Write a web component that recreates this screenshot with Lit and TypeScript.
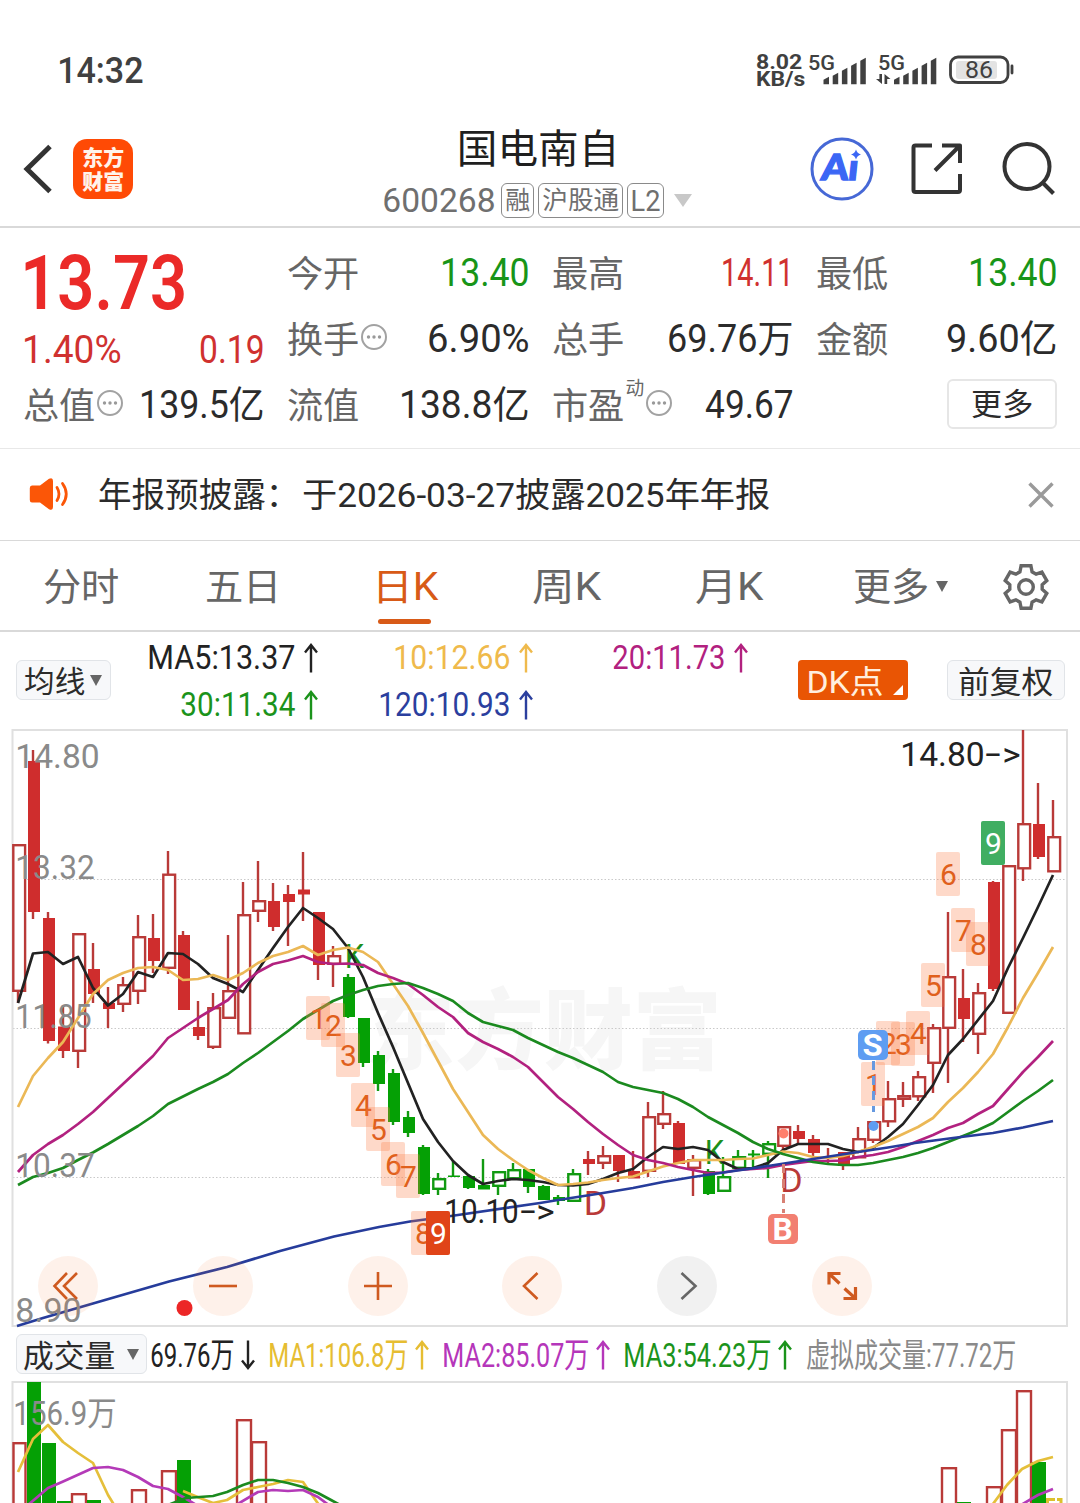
import { LitElement, html, svg, css } from "lit";
import { customElement, property } from "lit/decorators.js";

type Pt = [number, number];

/** A run of text drawn to an exact ink width, sized by cap height so rows can centre it. */
@customElement("fit-text")
class FitText extends LitElement {
  @property({ type: Number }) w = 100;
  @property({ type: Number }) size = 36;
  @property() text = "";
  static styles = css`
    :host { display: block; flex: none; }
    svg { display: block; overflow: visible; }
    text { fill: currentColor; font-family: Roboto, "Noto Sans CJK SC", sans-serif; font-weight: inherit; }
  `;
  render() {
    const cjk = this.text.charCodeAt(0) > 0x2e80;
    const b = this.size * (cjk ? 0.03 : 0.05);
    const h = this.size * 0.71;
    return html`<svg width=${this.w} height=${h}>
      <text x=${-b} y=${h} font-size=${this.size} textLength=${this.w + 1.3 * b} lengthAdjust="spacingAndGlyphs">${this.text}</text>
    </svg>`;
  }
}

@customElement("trend-arrow")
class TrendArrow extends LitElement {
  @property({ type: Boolean }) down = false;
  static styles = css`
    :host { display: block; flex: none; }
    svg { display: block; fill: none; stroke: currentColor; stroke-width: 2.4; }
    .down { transform: rotate(180deg); }
  `;
  render() {
    return html`<svg class=${this.down ? "down" : ""} width="14" height="30" viewBox="0 0 14 30">
      <path d="M7 29.5V2M1 9.5 7 2 13 9.5" />
    </svg>`;
  }
}

const t = (text: string, w: number, size = 38, cls = "") =>
  html`<fit-text class=${cls} .text=${text} .w=${w} .size=${size}></fit-text>`;

const more = html`<svg class="more" width="26" height="26" viewBox="0 0 26 26">
  <circle cx="13" cy="13" r="12" /><circle class="dot" cx="7.5" cy="13" r="1.7" /><circle class="dot" cx="13" cy="13" r="1.7" /><circle class="dot" cx="18.5" cy="13" r="1.7" />
</svg>`;

/* Candle: [kind, body top, body bottom, high, low]; R/G = red/green, lower case = hollow. */
type Candle = [string, number, number, number, number];
const candles: Candle[] = [
  ["r", 844, 992, 844, 1003], ["R", 761, 912, 750, 919], ["R", 918, 1041, 912, 1043.5], ["R", 1026.5, 1051, 1005, 1058],
  ["r", 933, 1052, 933, 1068], ["R", 969, 994, 943, 1003], ["R", 1003, 1009, 987, 1028], ["r", 984, 1005, 977, 1012],
  ["r", 936, 992, 915, 1004], ["R", 938, 961, 914, 973], ["r", 873.5, 969, 851, 974], ["R", 935, 1010, 931, 1010],
  ["R", 1027, 1036, 1001, 1040], ["r", 1007, 1048, 993, 1049], ["r", 990, 1019, 935, 1019], ["r", 914, 1034.5, 882, 1034],
  ["r", 900, 912, 861, 922], ["R", 901, 927, 883, 931], ["R", 894, 902, 885, 946], ["R", 889.5, 894.5, 852, 921],
  ["R", 912, 965, 912, 980], ["r", 955, 965, 946, 987], ["G", 977, 1017, 974, 1018], ["G", 1018, 1063, 1018, 1067],
  ["G", 1055, 1084, 1051, 1091], ["G", 1073, 1122, 1069, 1125], ["G", 1117, 1133, 1111, 1137], ["G", 1147, 1194, 1145, 1195],
  ["g", 1178, 1190, 1173, 1195], ["G", 1175.5, 1177, 1161, 1177], ["G", 1176, 1188, 1174, 1189], ["G", 1185, 1189.5, 1159, 1189],
  ["g", 1171, 1187, 1171, 1195], ["g", 1169, 1179.5, 1163, 1180], ["G", 1169, 1187, 1169, 1193], ["G", 1186, 1200, 1185, 1200],
  ["G", 1197, 1201, 1195, 1205], ["g", 1173, 1202, 1169, 1202], ["R", 1159, 1164, 1151, 1175], ["r", 1155, 1164, 1146, 1169],
  ["R", 1155, 1171, 1155, 1182], ["R", 1171, 1178.5, 1151, 1178], ["r", 1116, 1172, 1102, 1177], ["r", 1113, 1125, 1091, 1129],
  ["R", 1123, 1164, 1121, 1164], ["r", 1159, 1169, 1155, 1196], ["G", 1171, 1194, 1169, 1195], ["g", 1176, 1192, 1157, 1192],
  ["g", 1156, 1169, 1150, 1169], ["G", 1153.5, 1155.5, 1150, 1168], ["g", 1143, 1155, 1141, 1178], ["r", 1126, 1147, 1126, 1150],
  ["R", 1131, 1139, 1125, 1144], ["R", 1139, 1153, 1135, 1156], ["R", 1160, 1162, 1148, 1164], ["R", 1152, 1166, 1152, 1170],
  ["r", 1138, 1158.5, 1127, 1158], ["r", 1121, 1141, 1121, 1143], ["r", 1098, 1122.5, 1081, 1127], ["r", 1095, 1100, 1082, 1107],
  ["r", 1076, 1097.5, 1071, 1101], ["r", 1027, 1064, 1024, 1093], ["r", 976, 1029, 912, 1083], ["R", 998, 1019, 969, 1042],
  ["r", 992, 1035, 983, 1054], ["R", 882, 989, 881, 991], ["r", 865, 1014, 865, 1013], ["r", 823, 869.5, 730, 881],
  ["R", 824, 857, 783, 859], ["r", 836, 872.5, 800, 872],
];

const cx = (i: number) => 18 + 15 * i;
const series = (ys: number[]): Pt[] => ys.map((y, i) => [cx(i), y]);

const ma5 = series([1003, 953.5, 952, 964, 957, 988, 1005.5, 994, 972, 977, 953, 954, 964, 978, 984, 992, 970, 948, 927, 908, 918, 929, 948, 977, 1013, 1047, 1083, 1119, 1142, 1161, 1175, 1184, 1181, 1179, 1180, 1182, 1185, 1185.5, 1184, 1179, 1173, 1169, 1157, 1147, 1149, 1147, 1150, 1162, 1169, 1168, 1163, 1150, 1144, 1144, 1144, 1149, 1152, 1148, 1137, 1124, 1105, 1085, 1055, 1039, 1020, 1001, 968, 938, 907, 875]);
const ma10 = series([1107, 1076, 1058, 1042, 1018, 994, 980, 973, 968, 967, 970, 980, 979, 975, 980, 973, 963, 956, 952, 946, 955, 950, 947.5, 952, 962, 984, 1006, 1033, 1061, 1089, 1112, 1135, 1149, 1160, 1170, 1178, 1185, 1184, 1182.5, 1180, 1178, 1176.5, 1171.5, 1166.5, 1163, 1160, 1160, 1160, 1159, 1158.5, 1155, 1151.5, 1153, 1157, 1158, 1156, 1152, 1147, 1141, 1134, 1127, 1118, 1102, 1088, 1072, 1054, 1027, 998, 973, 947]);
const ma20 = series([1172, 1155, 1144, 1135, 1124, 1112, 1098, 1084, 1070, 1056, 1038, 1028, 1018, 1009, 1000, 984, 972, 964, 960.5, 956, 962, 964, 963.5, 965, 973, 978, 984, 995, 1007, 1017, 1033, 1042, 1049, 1057, 1067, 1082, 1097, 1109, 1122, 1134, 1145, 1155, 1160, 1163, 1167, 1170, 1173, 1172.5, 1170, 1169, 1168, 1165, 1163, 1161, 1161, 1160.5, 1157, 1155, 1152, 1147, 1141, 1135, 1128, 1123, 1114, 1106, 1089, 1072, 1057, 1041]);
const ma30 = series([1185, 1177, 1173, 1168, 1160, 1152.5, 1144, 1135, 1126, 1116, 1104, 1096.5, 1089, 1082, 1074, 1063, 1053, 1042, 1031, 1019, 1010, 1001, 995, 990, 986, 984, 983, 988, 994, 1001, 1013, 1022, 1026, 1030, 1038, 1045, 1052, 1058, 1065, 1072, 1082, 1087, 1090, 1093, 1099, 1107, 1117, 1125, 1133, 1142, 1149, 1154, 1158, 1162, 1164, 1165, 1165, 1163, 1160, 1157, 1153, 1148, 1142, 1136, 1130, 1123, 1112, 1101, 1091, 1080]);
const ma120: Pt[] = [[17, 1326], [43, 1318], [105, 1300], [169, 1281.5], [227, 1267], [280, 1251], [334, 1236.5], [379, 1227], [410, 1221.5], [451, 1216], [540, 1203], [558, 1200], [600, 1193.5], [633, 1188], [663, 1182], [693, 1177], [727, 1172], [768, 1166], [813, 1159], [858, 1152], [888, 1147.5], [915, 1143], [953, 1138], [993, 1133], [1023, 1127.5], [1053, 1121]];

/* Nine-count labels: [digit, box x, box y, style]. */
const counts: [string, number, number, string][] = [
  ["1", 306, 996, "soft"], ["2", 321, 1003, "soft"], ["3", 336, 1033, "soft"], ["4", 351, 1083, "soft"], ["5", 366, 1107, "soft"],
  ["6", 381, 1142, "soft"], ["7", 396, 1154, "soft"], ["8", 411, 1211, "soft"], ["9", 426, 1211, "hot"],
  ["1", 861, 1062, "soft"], ["2", 876, 1021, "soft"], ["3", 891, 1022, "soft"], ["4", 906, 1011, "soft"], ["5", 921, 963, "soft"],
  ["6", 936, 852, "soft"], ["7", 951, 908, "soft"], ["8", 966, 922, "soft"], ["9", 981, 821, "cool"],
];

/* Volume bars: [slot, kind, top]. */
const volumes: [number, string, number][] = [
  [0, "r", 1442], [1, "G", 1382], [2, "G", 1443], [3, "G", 1501], [4, "r", 1493], [5, "G", 1500], [8, "r", 1489], [10, "r", 1470],
  [11, "G", 1460], [15, "r", 1419], [16, "r", 1441], [62, "r", 1467], [63, "G", 1502], [65, "r", 1486], [66, "r", 1429], [67, "r", 1390], [68, "G", 1462],
];
const volLines: [string, Pt[]][] = [
  ["vy", [[18, 1472], [33, 1439], [48, 1425], [63, 1442], [78, 1453], [93, 1463], [108, 1495], [116, 1508]]],
  ["vy", [[183, 1491], [200, 1498], [213, 1503], [227, 1500], [243, 1490], [258, 1487], [273, 1484], [288, 1480], [303, 1482], [319, 1505]]],
  ["vy", [[990, 1508], [1007, 1485], [1022, 1469], [1038, 1461], [1053, 1457]]],
  ["vp", [[28, 1505], [48, 1488], [62, 1482], [93, 1468], [108, 1467], [123, 1470], [138, 1477], [153, 1486], [168, 1489], [183, 1497], [198, 1506]]],
  ["vp", [[236, 1505], [258, 1492], [273, 1490], [288, 1491], [303, 1490], [318, 1497], [330, 1506]]],
  ["vp", [[1021, 1505], [1038, 1495], [1053, 1489]]],
  ["vg", [[168, 1505], [186, 1498], [213, 1496], [227, 1492], [243, 1485], [258, 1480], [273, 1480], [288, 1483], [303, 1487], [318, 1493], [331, 1500], [342, 1506]]],
];

const pts = (p: Pt[]) => p.map((q) => q.join(",")).join(" ");

const ink = (text: string, x: number, y: number, w: number, size: number, cls: string) => {
  const b = size * 0.05;
  return svg`<text class=${cls} x=${x - b} y=${y} font-size=${size} textLength=${w + 1.4 * b} lengthAdjust="spacingAndGlyphs">${text}</text>`;
};

@customElement("price-chart")
class PriceChart extends LitElement {
  static styles = css`
    :host { display: block; height: 602px; position: relative; }
    svg { display: block; }
    text { font-family: Roboto, "Noto Sans CJK SC", sans-serif; }
    .frame { fill: none; stroke: #e0e0e0; stroke-width: 2; }
    .grid { stroke: #c9c9c9; stroke-width: 1.2; stroke-dasharray: 1.5 2; }
    .mark { fill: #f6f6f6; font-weight: 900; }
    .R { fill: #cf2d2d; } .G { fill: #05a005; }
    .r, .wr { fill: #fff; stroke: #b93a38; stroke-width: 2.4; }
    .g, .wg { fill: #fff; stroke: #119a11; stroke-width: 2.4; }
    .line { fill: none; stroke-width: 2.7; stroke-linejoin: round; }
    .k { stroke: #222; } .y { stroke: #ebb856; } .p { stroke: #b2217f; } .n { stroke: #1b8a1f; } .b { stroke: #263c9b; }
    .axis { fill: #8a8a8a; }
    .note { fill: #222; }
    .sell { fill: #b93a38; } .buy { fill: #1b8f1b; }
    .boxsoft { fill: #fa7d46; fill-opacity: 0.29; } .boxhot { fill: #e04418; } .boxcool { fill: #40ae62; }
    .soft { fill: #e0601c; } .hot, .cool { fill: #fff; }
    .sb { fill: #5e9df2; } .bb { fill: #f27f71; } .dotb { fill: #ff7f6c; }
    .badge { fill: #fff; font-weight: 700; }
    .ds { stroke: #6699e0; stroke-width: 3; stroke-dasharray: 9 6; }
    .db { stroke: #d88074; stroke-width: 3; stroke-dasharray: 9 6; }
    .alert { fill: #ec2626; }
    .tools { position: absolute; left: 38px; right: 208px; top: 528px; display: flex; justify-content: space-between; }
    .tool { width: 60px; height: 60px; border-radius: 50%; background: rgba(250, 120, 50, 0.1); }
    .tool.off { background: rgba(120, 120, 120, 0.1); }
    .tool path { fill: none; stroke: #cf5a20; stroke-width: 2.6; }
    .tool.bold path { stroke-width: 3.2; }
    .tool.off path { stroke: #666; }
  `;
  private candle([kind, top, bot, hi, lo]: Candle, i: number) {
    const x = cx(i);
    const c = kind.toLowerCase();
    const hollow = kind === c;
    return svg`<line class=${"w" + c} x1=${x} x2=${x} y1=${hi} y2=${lo} />${hollow
      ? svg`<rect class=${c} x=${x - 4.7} y=${top + 1.2} width="11.8" height=${Math.max(bot - top - 2.4, 1)} />`
      : svg`<rect class=${kind} x=${x - 5} y=${top} width="12" height=${bot - top} />`}`;
  }
  render() {
    const icons: [string, string][] = [
      ["M29 17 16.5 30 29 43M39 17 26 30 39 43", ""],
      ["M16 30H44", ""],
      ["M16 30H44M30 16V44", ""],
      ["M35.5 17 22 30 35.5 43", ""],
      ["M24.5 17 38.5 30 24.5 43", "off"],
      ["M17 28.500V17.500H28.500M17 17.500 27.500 27.500M43.500 31V42.500H31.500M43.500 42.500 32.500 32.500", "bold"],
    ];
    return html`<svg width="1080" height="602" viewBox="0 728 1080 602">
        ${ink("东方财富", 370, 1062, 350, 88, "mark")}
        ${[879.5, 1028.5, 1177.5].map((y) => svg`<line class="grid" x1="13" x2="1067" y1=${y} y2=${y} />`)}
        <rect class="frame" x="12.5" y="730" width="1054.5" height="596" />
        ${candles.map((c, i) => this.candle(c, i))}
        ${ink("K", 346.5, 968, 17, 34, "buy")} ${ink("K", 706.5, 1164, 17, 34, "buy")}
        ${ink("D", 585.5, 1215, 21, 34, "sell")} ${ink("D", 782, 1192, 20, 34, "sell")}
        <polyline class="line k" points=${pts(ma5)} />
        <polyline class="line y" points=${pts(ma10)} />
        <polyline class="line p" points=${pts(ma20)} />
        <polyline class="line n" points=${pts(ma30)} />
        <polyline class="line b" points=${pts(ma120)} />
        ${counts.map(([d, x, y, c]) => svg`<rect class=${"box" + c} x=${x} y=${y} width="24" height="44" rx="2" />
          <text class=${c} x=${x + 12.5} y=${y + 33} font-size="30" text-anchor="middle">${d}</text>`)}
        ${ink("14.80", 17, 767.5, 82, 34, "axis")} ${ink("13.32", 17, 878.5, 77, 34, "axis")} ${ink("11.85", 17, 1027.5, 74, 34, "axis")}
        ${ink("10.37", 17, 1177, 77, 34, "axis")} ${ink("8.90", 17, 1322, 64, 34, "axis")}
        ${ink("14.80", 902, 766, 82, 34, "note")} ${ink("-", 987, 765, 13, 34, "note")} ${ink(">", 1004, 766, 16, 34, "note")}
        ${ink("10.10", 446, 1222.5, 72, 34, "note")} ${ink("-", 522, 1221.5, 13, 34, "note")} ${ink(">", 538, 1222.5, 16, 34, "note")}
        <line class="ds" x1="873.5" x2="873.5" y1="1061" y2="1112" /><circle class="sb" cx="873.5" cy="1126" r="5" />
        <rect class="sb" x="858" y="1030" width="30" height="30" rx="5" />${ink("S", 864, 1056, 18, 31, "badge")}
        <line class="db" x1="783.5" x2="783.5" y1="1164" y2="1213" /><circle class="dotb" cx="783.5" cy="1133.5" r="5" />
        <rect class="bb" x="768" y="1214" width="30" height="30" rx="5" />${ink("B", 774, 1240, 18, 31, "badge")}
        <circle class="alert" cx="184.5" cy="1308" r="8" />
      </svg>
      <div class="tools">${icons.map(([d, c]) => html`<div class="tool ${c}"><svg width="60" height="60"><path d=${d} /></svg></div>`)}</div>`;
  }
}

@customElement("volume-chart")
class VolumeChart extends LitElement {
  static styles = css`
    :host { display: block; height: 125px; }
    svg { display: block; }
    .frame { fill: none; stroke: #e0e0e0; stroke-width: 2; }
    .r { fill: #fff; stroke: #b93a38; stroke-width: 2.4; }
    .G { fill: #05a005; }
    .line { fill: none; stroke-width: 2.7; stroke-linejoin: round; }
    .vy { stroke: #e5bf3a; } .vp { stroke: #b43ab8; } .vg { stroke: #1b8a1f; }
    .axis { fill: #8a8a8a; font-family: Roboto, "Noto Sans CJK SC", sans-serif; }
    .corner { fill: none; stroke: #dcc12c; stroke-width: 3; }
  `;
  render() {
    return html`<svg width="1080" height="125" viewBox="0 1378 1080 125">
      <rect class="frame" x="12.5" y="1382" width="1054.5" height="200" />
      ${volumes.map(([i, k, y]) => k === "G"
        ? svg`<rect class="G" x=${cx(i) - 6} y=${y} width="14" height="160" />`
        : svg`<rect class="r" x=${cx(i) - (i ? 6 : 4.5)} y=${y + 1.2} width=${i ? 14 : 12} height="160" />`)}
      ${volLines.map(([c, p]) => svg`<polyline class=${"line " + c} points=${pts(p)} />`)}
      <path class="corner" d="M1046 1499.5H1055M1047.5 1499V1503M1057 1499.5H1061V1503" />
      ${ink("156.9万", 15, 1424.5, 101, 33, "axis")}
    </svg>`;
  }
}

const gearPath = () => {
  const p: string[] = [];
  for (let k = 0; k < 6; k++) {
    for (const [r, a] of [[16.4, -22], [21.8, -13], [21.8, 13], [16.4, 22]]) {
      const th = ((k * 60 + a - 90) * Math.PI) / 180;
      p.push(`${(24 + r * Math.cos(th)).toFixed(1)} ${(24 + r * Math.sin(th)).toFixed(1)}`);
    }
  }
  return "M" + p.join("L") + "Z";
};

@customElement("app-root")
class AppRoot extends LitElement {
  static styles = css`
    :host { display: block; width: 1080px; height: 1503px; overflow: hidden; background: #fff; font-family: Roboto, "Noto Sans CJK SC", sans-serif; color: #2b2b2b; }
    * { box-sizing: border-box; }
    svg { display: block; flex: none; overflow: visible; }
    .row { display: flex; align-items: center; }
    .status { height: 110px; padding: 30px 67px 0 59px; justify-content: space-between; color: #404040; font-weight: 500; }
    .sys { display: flex; align-items: center; }
    .net { display: flex; flex-direction: column; gap: 3px; font-weight: 700; margin-right: 4px; }
    .sig text, .batt text { font-family: Roboto, sans-serif; fill: #404040; font-weight: 500; }
    .batt .lvl { font-weight: 400; }
    .sig { fill: #404040; }
    .tip, .shell { fill: none; stroke: #404040; stroke-width: 2.8; }
    .tip { stroke-linecap: round; }
    .charge { fill: #e3e3e3; }
    .head { height: 118px; border-bottom: 2px solid #d9d9d9; display: grid; grid-template-columns: 340px 396px 344px; align-items: center; padding-top: 2px; }
    .left { display: flex; align-items: center; padding-left: 24px; gap: 21px; }
    .stroke { fill: none; stroke: #333; stroke-width: 4; stroke-linejoin: round; }
    .back { stroke-width: 5; stroke-linejoin: miter; }
    .logo { width: 60px; height: 60px; border-radius: 14px; background: #ff4a05; color: #fff3ea; display: flex; flex-direction: column; align-items: center; justify-content: center; gap: 9px; font-weight: 900; }
    .mid { display: flex; flex-direction: column; align-items: center; padding-top: 9px; }
    .name { height: 40px; display: flex; align-items: center; margin-bottom: 13px; color: #1f1f1f; }
    .codes { display: flex; align-items: center; gap: 4px; height: 36px; color: #6f6f6f; }
    .tag { border: 1.5px solid #8a8a8a; border-radius: 6px; height: 35px; display: flex; align-items: center; justify-content: center; }
    .t1 { width: 33px; margin-left: 2px; } .t3 { width: 85px; } .t2 { width: 37px; }
    .caret { width: 0; border-style: solid; border-color: #c8c8c8 transparent transparent; border-width: 13px 9.5px 0; margin-left: 6px; }
    .right { display: flex; align-items: center; padding-left: 74px; }
    .ai { fill: none; stroke: #4668d6; stroke-width: 3; }
    .aifill { fill: #3b66f5; } .aitext { fill: #3b66f5; stroke: #3b66f5; stroke-width: 1.4; font: 900 36px Lato, Roboto, sans-serif; }
    .share { margin-left: 37px; } .find { margin-left: 39px; }
    .stats { height: 221px; padding: 11px 0 0 24px; border-bottom: 1.5px solid #e8e8e8; display: grid; grid-template-columns: 240px 241px 240px 240px; grid-template-rows: 66px 66px 66px; column-gap: 24px; }
    .cell { display: flex; align-items: center; justify-content: space-between; }
    .price { grid-row: 1 / span 2; display: flex; flex-direction: column; padding-top: 16px; gap: 27px; }
    .big { font-weight: 600; color: #eb2a28; }
    .pair { display: flex; justify-content: space-between; }
    .label { display: flex; align-items: center; gap: 2px; color: #666; padding-top: 3px; }
    .red { color: #d0312f; } .green { color: #189518; }
    .more { fill: none; stroke: #a2a2a2; stroke-width: 2; margin-top: -5px; }
    .dot { fill: #999; stroke: none; }
    .sup { align-self: flex-start; margin-top: -12px; }
    .morebtn { margin-left: auto; width: 110px; height: 50px; border: 2px solid #e6e6e6; border-radius: 6px; display: flex; align-items: center; justify-content: center; }
    .notice { height: 92px; border-bottom: 1.5px solid #d9d9d9; padding: 0 26px 0 29px; }
    .notice .msg { margin: 2px auto 0 30px; display: flex; gap: 4px; }
    .horn { fill: #fb5607; } .wave { fill: none; stroke: #fb5607; stroke-width: 2.8; stroke-linecap: round; }
    .close { fill: none; stroke: #9a9a9a; stroke-width: 3.4; }
    .tabs { height: 91px; border-bottom: 2px solid #d9d9d9; display: grid; grid-template-columns: repeat(5, 162px) 182px 68px; color: #666; }
    .tab { display: flex; align-items: center; justify-content: center; gap: 7px; position: relative; padding-top: 2px; }
    .tab.on { color: #d85a17; }
    .tab.on::after { content: ""; position: absolute; left: 54px; bottom: 6px; width: 53px; height: 5px; border-radius: 3px; background: #d85a17; }
    .tri { border-style: solid; border-color: #666 transparent transparent; border-width: 11px 6.5px 0; }
    .gear { fill: none; stroke: #666; stroke-width: 3.4; stroke-linejoin: miter; }
    .mas { height: 96px; padding: 0 15px 0 16px; }
    .chip { border: 1.5px solid #e1e4e8; background: #f7f8fa; border-radius: 6px; height: 40px; display: flex; align-items: center; justify-content: center; gap: 5px; flex: none; }
    .chip fit-text { margin-top: 3px; }
    .avg { width: 95px; } .adj { width: 118px; margin-left: 39px; } .vol { width: 131px; gap: 12px; margin-right: 5px; }
    .magrid { display: grid; grid-template-columns: 207px 215px 215px; grid-template-rows: 47px 47px; padding-top: 3px; }
    .ma { display: flex; align-items: center; justify-content: flex-end; gap: 9px; }
    .c5 { color: #222; } .c10 { color: #efba4c; } .c20 { color: #b2217f; } .c30 { color: #1b931b; } .c120 { color: #2b3f9e; }
    .dk { width: 110px; height: 40px; border-radius: 4px; background: #e95504; color: #ffeede; margin-left: 50px; padding: 0 5px 5px 10px; display: flex; align-items: flex-end; justify-content: space-between; flex: none; }
    .dk .lab { margin-bottom: 2.500px; }
    .corner { width: 0; border-style: solid; border-width: 0 0 10px 10px; border-color: transparent transparent #fff; }
    .vols { height: 48px; padding-left: 16px; }
    .pairv { display: flex; align-items: center; gap: 7px; margin-right: 15px; padding-top: 2px; }
    .vy { color: #e6bd32; } .vp { color: #b536ba; } .vg { color: #1b931b; } .gray { color: #8a8a8a; margin-top: 4px; }
  `;
  private bars(x: number) {
    return [7.6, 11.6, 16.6, 21.6, 26.6].map((h, i) => svg`<path d="M${x + i * 9.2} 33.3v${-(h - 3)}l5.5-3v${h}z" />`);
  }
  render() {
    return html`
      <header class="row status">
        ${t("14:32", 84, 37)}
        <div class="sys">
          <div class="net">${t("8.02", 45, 21)}${t("KB/s", 48, 20)}</div>
          <svg class="sig" width="136" height="38" viewBox="0 0 136 38">
            <text x="-1" y="18.5" font-size="20" textLength="27" lengthAdjust="spacingAndGlyphs">5G</text>${this.bars(14.5)}
            <text x="69" y="18.5" font-size="20" textLength="27" lengthAdjust="spacingAndGlyphs">5G</text>${this.bars(85)}
            <path d="M73 23v10l-6-5h3.4v-5zM75.5 33V23l6 5h-3.3v5z" />
          </svg>
          <svg class="batt" width="68" height="30" viewBox="0 0 68 30">
            <rect class="shell" x="5.5" y="2" width="57.5" height="25.5" rx="7.5" />
            <rect class="charge" x="11" y="6" width="41" height="18" rx="3" />
            <path class="tip" d="M67 11v7" />
            <text class="lvl" x="20" y="23" font-size="23" textLength="28" lengthAdjust="spacingAndGlyphs">86</text>
          </svg>
        </div>
      </header>

      <section class="head">
        <div class="left">
          <svg width="28" height="48"><path class="stroke back" d="M26 1.5 3 24 26 46.5" /></svg>
          <div class="logo">${t("东方", 41, 21)}${t("财富", 41, 21)}</div>
        </div>
        <div class="mid">
          <div class="name">${t("国电南自", 161, 40)}</div>
          <div class="codes">
            ${t("600268", 111, 34)}
            <span class="tag t1">${t("融", 24, 25)}</span>
            <span class="tag t3">${t("沪股通", 76, 25)}</span>
            <span class="tag t2">${t("L2", 28, 29)}</span>
            <i class="caret"></i>
          </div>
        </div>
        <div class="right">
          <svg width="64" height="64">
            <circle class="ai" cx="32" cy="32" r="30" />
            <g transform="translate(4 0) skewX(-6)">
              <text class="aitext" x="11" y="43.5" textLength="37" lengthAdjust="spacingAndGlyphs">Aı</text>
            </g>
            <path class="aifill" d="M46 12.500q1.100 4 5 5-3.900 1-5 5-1.100-4-5-5 3.900-1 5-5z" />
          </svg>
          <svg class="share stroke" width="52" height="52"><path d="M21 2.500H4.500Q2.500 2.500 2.500 4.500V47Q2.500 49 4.500 49H47Q49 49 49 47V31M31 2.500H49V20M49 2.500 24 27.500" /></svg>
          <svg class="find stroke" width="54" height="54"><circle cx="25" cy="24.500" r="22.500" /><path d="M40.500 40.500 51.500 51.500" /></svg>
        </div>
      </section>

      <section class="stats">
        <div class="price">
          ${t("13.73", 162, 76, "big")}
          <div class="pair red">${t("1.40%", 97)}${t("0.19", 63)}</div>
        </div>
        <div class="cell"><div class="label">${t("今开", 71, 36)}</div>${t("13.40", 87, 38, "green")}</div>
        <div class="cell"><div class="label">${t("最高", 71, 36)}</div>${t("14.11", 70, 38, "red")}</div>
        <div class="cell"><div class="label">${t("最低", 71, 36)}</div>${t("13.40", 87, 38, "green")}</div>
        <div class="cell"><div class="label">${t("换手", 71, 36)}${more}</div>${t("6.90%", 100)}</div>
        <div class="cell"><div class="label">${t("总手", 71, 36)}</div>${t("69.76万", 124)}</div>
        <div class="cell"><div class="label">${t("金额", 71, 36)}</div>${t("9.60亿", 109)}</div>
        <div class="cell"><div class="label">${t("总值", 71, 36)}${more}</div>${t("139.5亿", 123)}</div>
        <div class="cell"><div class="label">${t("流值", 71, 36)}</div>${t("138.8亿", 128)}</div>
        <div class="cell"><div class="label">${t("市盈", 71, 36)}${t("动", 18, 19, "sup")}${more}</div>${t("49.67", 86)}</div>
        <div class="cell"><div class="morebtn">${t("更多", 61, 31)}</div></div>
      </section>

      <section class="row notice">
        <svg width="40" height="34" viewBox="0 0 40 34">
          <path class="horn" d="M3 7.500H11L20 0.800Q24 -1 24 3V29Q24 33 20 31.200L11 24.500H3Q0.800 24.500 0.800 22V10Q0.800 7.500 3 7.500Z" />
          <path class="wave" d="M28 9.500Q32 16 28 22.500M33.500 5.500Q41 16 33.500 26.500" />
        </svg>
        <div class="msg">${t("年报预披露：", 200, 34)}${t("于2026-03-27披露2025年年报", 467, 34)}</div>
        <svg class="close" width="26" height="26"><path d="M1.500 1.500 24.500 24.500M24.500 1.500 1.500 24.500" /></svg>
      </section>

      <nav class="tabs">
        <div class="tab">${t("分时", 75, 38)}</div>
        <div class="tab">${t("五日", 75, 38)}</div>
        <div class="tab on">${t("日K", 65, 38)}</div>
        <div class="tab">${t("周K", 68, 38)}</div>
        <div class="tab">${t("月K", 67, 38)}</div>
        <div class="tab">${t("更多", 75, 38)}<i class="tri"></i></div>
        <div class="tab"><svg class="gear" width="48" height="48"><path d=${gearPath()} /><circle cx="24" cy="24" r="7.300" /></svg></div>
      </nav>

      <section class="row mas">
        <div class="chip avg">${t("均线", 60, 30)}<i class="tri"></i></div>
        <div class="magrid">
          <div class="ma c5">${t("MA5:13.37", 146, 33)}<trend-arrow></trend-arrow></div>
          <div class="ma c10">${t("10:12.66", 115, 33)}<trend-arrow></trend-arrow></div>
          <div class="ma c20">${t("20:11.73", 111, 33)}<trend-arrow></trend-arrow></div>
          <div class="ma c30">${t("30:11.34", 113, 33)}<trend-arrow></trend-arrow></div>
          <div class="ma c120">${t("120:10.93", 130, 33)}<trend-arrow></trend-arrow></div>
        </div>
        <div class="dk">${t("DK点", 75, 32, "lab")}<i class="corner"></i></div>
        <div class="chip adj">${t("前复权", 94, 31)}</div>
      </section>

      <price-chart></price-chart>

      <section class="row vols">
        <div class="chip vol">${t("成交量", 91, 31)}<i class="tri"></i></div>
        <div class="pairv c5">${t("69.76万", 82, 34)}<trend-arrow down></trend-arrow></div>
        <div class="pairv vy">${t("MA1:106.8万", 138, 34)}<trend-arrow></trend-arrow></div>
        <div class="pairv vp">${t("MA2:85.07万", 145, 34)}<trend-arrow></trend-arrow></div>
        <div class="pairv vg">${t("MA3:54.23万", 146, 34)}<trend-arrow></trend-arrow></div>
        ${t("虚拟成交量:77.72万", 209, 33, "gray")}
      </section>

      <volume-chart></volume-chart>
    `;
  }
}
